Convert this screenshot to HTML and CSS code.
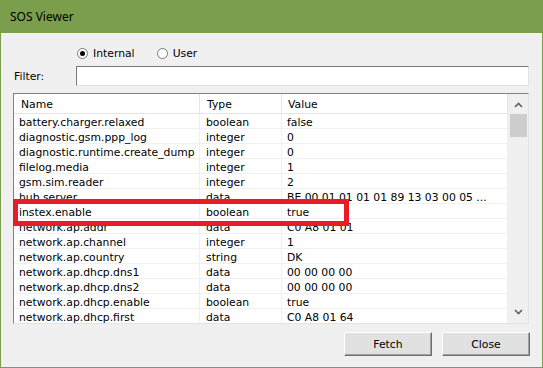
FILE: index.html
```html
<!DOCTYPE html>
<html lang="en">
<head>
    <meta charset="UTF-8">
    <title>SOS Viewer</title>
    <link rel="stylesheet" href="styles.css">
</head>
<body>
    <div class="window">
        <div class="titlebar">SOS Viewer</div>
        <div class="content">
            <div class="radio-row">
                <label class="radio"><span class="radio-dot checked"></span>Internal</label>
                <label class="radio"><span class="radio-dot"></span>User</label>
            </div>
            <div class="filter-row">
                <span class="filter-label">Filter:</span>
                <div class="filter-input"></div>
            </div>
            <div class="list">
                <div class="grid">
                    <div class="row head">
                        <div class="cell c-name">Name</div>
                        <div class="cell c-type">Type</div>
                        <div class="cell c-value">Value</div>
                    </div>
                    <div id="rows"></div>
                </div>
                <div class="scrollbar">
                    <svg class="arrow" width="9" height="6" viewBox="0 0 9 6"><polyline points="1,5 4.5,1.5 8,5" fill="none" stroke="#606060" stroke-width="1.6"/></svg>
                    <div class="thumb"></div>
                    <div class="track"></div>
                    <svg class="arrow" width="9" height="6" viewBox="0 0 9 6"><polyline points="1,1 4.5,4.5 8,1" fill="none" stroke="#606060" stroke-width="1.6"/></svg>
                </div>
                <div class="highlight"></div>
            </div>
            <div class="buttons">
                <button class="btn">Fetch</button>
                <button class="btn">Close</button>
            </div>
        </div>
    </div>

    <script>
        const items = [
            ['battery.charger.relaxed', 'boolean', 'false'],
            ['diagnostic.gsm.ppp_log', 'integer', '0'],
            ['diagnostic.runtime.create_dump', 'integer', '0'],
            ['filelog.media', 'integer', '1'],
            ['gsm.sim.reader', 'integer', '2'],
            ['hub.server', 'data', 'BE 00 01 01 01 01 89 13 03 00 05 ...'],
            ['instex.enable', 'boolean', 'true'],
            ['network.ap.addr', 'data', 'C0 A8 01 01'],
            ['network.ap.channel', 'integer', '1'],
            ['network.ap.country', 'string', 'DK'],
            ['network.ap.dhcp.dns1', 'data', '00 00 00 00'],
            ['network.ap.dhcp.dns2', 'data', '00 00 00 00'],
            ['network.ap.dhcp.enable', 'boolean', 'true'],
            ['network.ap.dhcp.first', 'data', 'C0 A8 01 64']
        ];

        const rows = document.getElementById('rows');
        items.forEach(item => {
            const row = document.createElement('div');
            row.className = 'row';
            row.innerHTML = `
                <div class="cell c-name">${item[0]}</div>
                <div class="cell c-type">${item[1]}</div>
                <div class="cell c-value">${item[2]}</div>
            `;
            rows.appendChild(row);
        });
    </script>
</body>
</html>
```

FILE: styles.css
```css
body {
    margin: 0;
    font-family: "DejaVu Sans", sans-serif;
    font-size: 10.8px;
    color: #000;
}
.window {
    width: 543px;
    height: 368px;
    box-sizing: border-box;
    border: 1px solid #7a9e4b;
    border-top: none;
    background-color: #f0f0f0;
    display: flex;
    flex-direction: column;
}
.titlebar {
    height: 33px;
    background-color: #7a9e4b;
    color: #000;
    font-family: "Noto Sans", sans-serif;
    font-size: 12px;
    line-height: 33px;
    padding-left: 9px;
    flex-shrink: 0;
}
.content {
    padding: 14px 12px 0 12px;
}
.radio-row {
    display: flex;
    align-items: center;
    height: 13px;
    padding-left: 64px;
    gap: 22px;
}
.radio {
    display: flex;
    align-items: center;
    gap: 5px;
}
.radio-dot {
    width: 11px;
    height: 11px;
    box-sizing: border-box;
    border: 1px solid #7a7a7a;
    border-radius: 50%;
    background-color: #fff;
    display: flex;
    align-items: center;
    justify-content: center;
}
.radio-dot.checked::after {
    content: "";
    width: 5px;
    height: 5px;
    border-radius: 50%;
    background-color: #000;
}
.filter-row {
    display: flex;
    align-items: center;
    margin-top: 6px;
    height: 20px;
    padding-right: 1px;
}
.filter-label {
    width: 62px;
    padding-left: 1px;
}
.filter-input {
    flex: 1;
    height: 20px;
    box-sizing: border-box;
    background-color: #fff;
    border: 1px solid;
    border-color: #7a7a7a #e3e3e3 #e3e3e3 #7a7a7a;
}
.list {
    position: relative;
    margin-top: 7px;
    margin-right: 1px;
    height: 231px;
    box-sizing: border-box;
    border: 1px solid;
    border-color: #828282 #e3e3e3 #e3e3e3 #828282;
    background-color: #fff;
    display: flex;
}
.grid {
    width: 494px;
    overflow: hidden;
}
.row {
    display: flex;
    height: 15px;
    line-height: 14px;
    box-sizing: border-box;
    border-bottom: 1px solid #f0f0f0;
    white-space: nowrap;
}
.row.head {
    height: 20px;
    line-height: 19px;
    border-bottom: 1px solid #e5e5e5;
}
.cell {
    box-sizing: border-box;
    border-right: 1px solid #f0f0f0;
    padding-left: 5px;
    padding-top: 2px;
}
.head .cell {
    border-right-color: #e5e5e5;
    padding-left: 7px;
    padding-top: 1px;
}
.c-name {
    width: 186px;
}
.c-type {
    width: 82px;
    padding-left: 6px;
}
.c-value {
    width: 226px;
}
.head .c-value {
    padding-left: 6px;
}
.scrollbar {
    flex: 1;
    background-color: #f0f0f0;
    display: flex;
    flex-direction: column;
    align-items: center;
}
.arrow {
    margin: 8px 0;
}
.thumb {
    width: 17px;
    height: 23px;
    background-color: #cdcdcd;
    margin-top: -2px;
}
.track {
    flex: 1;
}
.highlight {
    position: absolute;
    left: -1px;
    top: 105px;
    width: 336px;
    height: 27px;
    box-sizing: border-box;
    border: 5px solid #e81c24;
}
.buttons {
    display: flex;
    justify-content: flex-end;
    gap: 10px;
    margin-top: 8px;
}
.btn {
    width: 88px;
    height: 24px;
    font-family: "DejaVu Sans", sans-serif;
    font-size: 10.8px;
    color: #000;
    background-color: #e1e1e1;
    border: 1px solid;
    border-color: #fff #6e6e6e #6e6e6e #fff;
    box-shadow: inset -1px -1px 0 #a0a0a0;
    padding: 0;
}
```
